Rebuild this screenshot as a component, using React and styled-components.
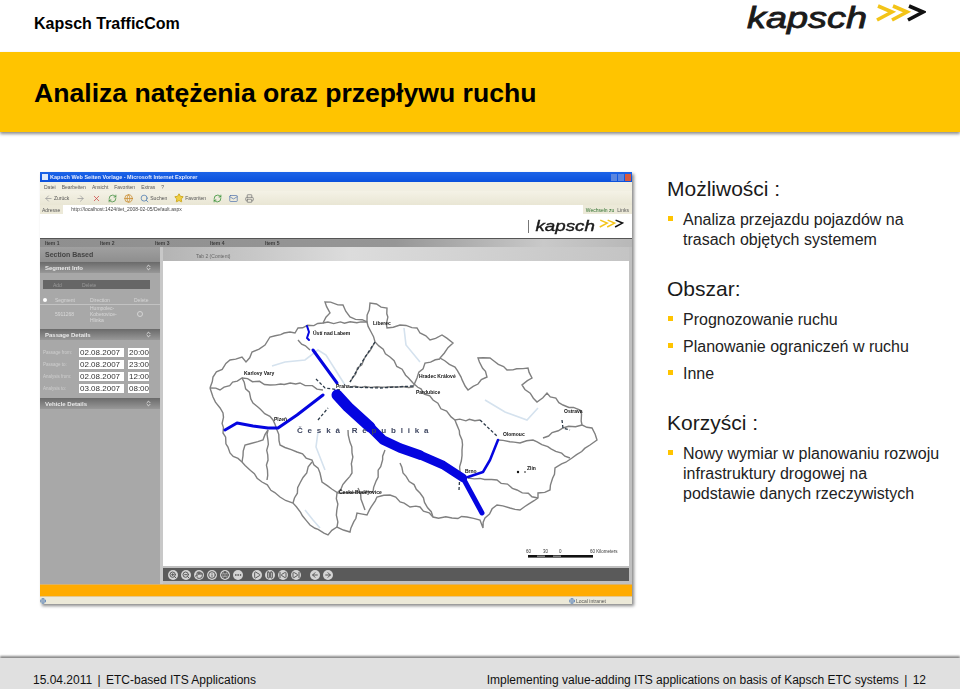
import React from "react";
import styled, { createGlobalStyle } from "styled-components";
import {
  ArrowLeft,
  ArrowRight,
  ChevronsUpDown,
  Ellipsis,
  Globe,
  Hand,
  Info,
  Mail,
  Pause,
  Play,
  Printer,
  RefreshCw,
  Search,
  SkipBack,
  SkipForward,
  Star,
  X,
  ZoomIn,
  ZoomOut,
} from "lucide-react";

const YELLOW = "#ffc400";

const GlobalStyle = createGlobalStyle`
  html, body {
    margin: 0;
    padding: 0;
    background: #fff;
  }
  body {
    font-family: "Liberation Sans", Arial, sans-serif;
    color: #000;
  }
`;

const BORDERS = [
  "210,388 213,377 230,360 242,357 246,362 252,352 265,345 270,337 290,332 295,333 298,328 323,323 330,313 325,302 343,305 350,317 367,322 370,303 387,308 387,328 400,325 417,328 420,333 430,340 442,335 453,343 440,358 455,367 468,390 487,377 478,358 490,358 507,370 528,368 532,378 522,385 537,402 547,393 563,405 580,410 582,425 592,428 597,440 590,445 572,458 555,468 550,490 538,493 538,498 520,510 510,508 497,505 485,518 483,528 480,520 467,517 452,518 433,517 420,507 410,507 390,495 377,497 367,515 357,513 350,532 337,527 328,535 310,525 293,503 280,497 262,482 242,462 230,453 223,433 223,413 213,397 210,388",
  "210,388 220,390 242,378 253,403 273,420 277,430 280,445 297,452 312,460 320,473 322,482 338,493 373,492 385,450",
  "242,378 270,385 300,383 323,390",
  "298,340 310,350",
  "323,323 367,322 375,342 390,357 413,383 433,400 455,420 480,420",
  "375,342 350,382",
  "350,387 413,387 417,378 425,363 440,359",
  "455,420 462,440 462,450 460,472",
  "468,478 497,480 517,490 538,498",
  "498,440 520,443 533,440 570,458",
  "582,425 563,428 543,438",
  "400,463 403,473 420,493 433,517",
  "348,430 352,453 352,473 337,493 337,527",
  "312,462 300,483 293,503",
  "268,430 267,480",
  "242,462 245,445 263,440 268,430",
  "358,488 365,510",
];

// border lines are hand traced, this roughens them a bit so they read like a map
const roughen = (points) => {
  const pairs = points.split(" ").map((p) => p.split(",").map(Number));
  const out = [];
  pairs.forEach(([x, y], i) => {
    out.push(`${x},${y}`);
    const next = pairs[i + 1];
    if (!next) return;
    const steps = Math.floor(Math.hypot(next[0] - x, next[1] - y) / 5);
    for (let s = 1; s < steps; s++) {
      const t = s / steps;
      const dx = Math.sin(x * 7.3 + s * 2.1) * 0.9;
      const dy = Math.cos(y * 5.7 + s * 3.3) * 0.9;
      out.push(`${x + (next[0] - x) * t + dx},${y + (next[1] - y) * t + dy}`);
    }
  });
  return out.join(" ");
};

const RIVERS = [
  "272,366 285,362 305,360 318,350 326,355 345,385",
  "318,432 316,447 325,470",
  "305,510 313,520 320,528",
  "485,400 505,412 527,420 538,408",
  "404,328 406,345 420,362",
];

const DARK_ROADS = [
  "375,342 362,362 350,382",
  "350,387 380,388 413,386",
  "316,379 325,388 340,390",
  "318,420 328,408",
  "480,420 498,437",
  "562,420 563,428 570,430",
  "460,472 459,490",
];

const BLUE_LINES = [
  { points: "337,395 348,407 370,427", width: 11 },
  { points: "370,427 383,440 400,448 420,455", width: 9.5 },
  { points: "420,455 443,465 463,478", width: 8.5 },
  { points: "463,478 482,513", width: 5 },
  { points: "225,430 237,423 253,426 268,428 278,428 297,415 323,395", width: 3 },
  { points: "313,350 337,383", width: 3 },
  { points: "307,326 309,332 307,338 309,340", width: 2 },
  { points: "468,477 483,472 490,460 498,440", width: 2.5 },
];

const CITIES = [
  { name: "Ústí nad Labem", x: 313, y: 335 },
  { name: "Liberec", x: 373, y: 325 },
  { name: "Karlovy Vary", x: 244, y: 375 },
  { name: "Praha", x: 336, y: 388 },
  { name: "Plzeň", x: 274, y: 421 },
  { name: "Hradec Králové", x: 419, y: 378 },
  { name: "Pardubice", x: 416, y: 394 },
  { name: "Ostrava", x: 564, y: 413 },
  { name: "Olomouc", x: 503, y: 436 },
  { name: "Brno", x: 465, y: 473 },
  { name: "Zlín", x: 527, y: 470 },
  { name: "České Budějovice", x: 339, y: 494 },
];

const NAV_ITEMS = ["Item 1", "Item 2", "Item 3", "Item 4", "Item 5"];
const MENU_ITEMS = ["Datei", "Bearbeiten", "Ansicht", "Favoriten", "Extras", "?"];

const PASSAGE_ROWS = [
  { label: "Passage from:", date: "02.08.2007", time: "20:00" },
  { label: "Passage to:", date: "02.08.2007", time: "23:00" },
  { label: "Analysis from:", date: "02.08.2007", time: "12:00" },
  { label: "Analysis to:", date: "03.08.2007", time: "08:00" },
];

const TOOL_GROUPS = [
  [ZoomIn, ZoomOut, Hand, Info, Globe, Ellipsis],
  [Play, Pause, SkipBack, SkipForward],
  [ArrowLeft, ArrowRight],
];

const SECTIONS = [
  {
    title: "Możliwości :",
    items: [["Analiza przejazdu pojazdów na", "trasach objętych systemem"]],
  },
  {
    title: "Obszar:",
    items: [["Prognozowanie ruchu"], ["Planowanie ograniczeń w ruchu"], ["Inne"]],
  },
  {
    title: "Korzyści :",
    items: [
      [
        "Nowy wymiar w planowaniu rozwoju",
        "infrastruktury drogowej na",
        "podstawie danych rzeczywistych",
      ],
    ],
  },
];

const KapschLogo = ({ width, height, small }) => (
  <svg width={width} height={height} viewBox="0 0 182 34">
    <text
      x="3"
      y="26"
      fontFamily="Liberation Sans, sans-serif"
      fontStyle="italic"
      fontSize="29"
      textLength="120"
      lengthAdjust="spacingAndGlyphs"
      fill="#1a1a1a"
      stroke="#1a1a1a"
      strokeWidth="0.8"
    >
      kapsch
    </text>
    <g fill="none" strokeWidth={small ? 3 : 3.6}>
      <polyline points="134,4 148,10 133,18" stroke="#f3c418" />
      <polyline points="149,4 163,10 148,18" stroke="#f3c418" />
      <polyline points="165,4 179,10 164,18" stroke="#111" />
    </g>
  </svg>
);

const CzechMap = () => (
  <MapSvg viewBox="163 261 466 305">
    {RIVERS.map((points) => (
      <polyline key={points} points={points} fill="none" stroke="#d5e2ee" strokeWidth="1.6" />
    ))}
    {BORDERS.map((points) => (
      <polyline
        key={points}
        points={roughen(points)}
        fill="none"
        stroke="#808080"
        strokeWidth="1.4"
      />
    ))}
    {DARK_ROADS.map((points) => (
      <polyline
        key={points}
        points={points}
        fill="none"
        stroke="#2c3a48"
        strokeWidth="1.3"
        strokeDasharray="3 2"
      />
    ))}
    {BLUE_LINES.map((line) => (
      <polyline
        key={line.points}
        points={line.points}
        fill="none"
        stroke="#0505e0"
        strokeWidth={line.width}
        strokeLinejoin="round"
        strokeLinecap="round"
      />
    ))}
    {CITIES.map((city) => (
      <CityLabel key={city.name} x={city.x} y={city.y}>
        {city.name}
      </CityLabel>
    ))}
    <CountryLabel x="297" y="433">
      Č e s k á   R e p u b l i k a
    </CountryLabel>
    <circle cx="518" cy="472" r="1.2" fill="#111" />
    <circle cx="525" cy="472" r="0.8" fill="#111" />
    <ScaleLabel x="526" y="553">60</ScaleLabel>
    <ScaleLabel x="543" y="553">30</ScaleLabel>
    <ScaleLabel x="559" y="553">0</ScaleLabel>
    <ScaleLabel x="590" y="553">60 Kilometers</ScaleLabel>
    <rect x="528" y="555" width="65" height="2.6" fill="#111" />
    <rect x="537" y="555.6" width="8" height="1.2" fill="#999" />
    <rect x="553" y="555.6" width="8" height="1.2" fill="#999" />
  </MapSvg>
);

const App = () => {
  return (
    <Page>
      <GlobalStyle />
      <TopBar>
        <Company>Kapsch TrafficCom</Company>
        <KapschLogo width={182} height={34} />
      </TopBar>
      <Banner>
        <Title>Analiza natężenia oraz przepływu ruchu</Title>
      </Banner>

      <Main>
        <BrowserWindow>
          <TitleBar>
            <TitleIcon />
            <TitleText>Kapsch Web Seiten Vorlage - Microsoft Internet Explorer</TitleText>
            <WindowButtons>
              <WindowButton />
              <WindowButton />
              <WindowButton $close />
            </WindowButtons>
          </TitleBar>
          <MenuBar>
            {MENU_ITEMS.map((item) => (
              <span key={item}>{item}</span>
            ))}
          </MenuBar>
          <IeToolbar>
            <ToolLabel><ArrowLeft size={9} color="#999" /> Zurück</ToolLabel>
            <ArrowRight size={9} color="#999" />
            <X size={9} color="#c44" />
            <RefreshCw size={9} color="#3a8a3a" />
            <Globe size={9} color="#c98a2c" />
            <ToolLabel><Search size={9} color="#4a78b0" /> Suchen</ToolLabel>
            <ToolLabel><Star size={10} color="#c8a010" fill="#f0cf40" /> Favoriten</ToolLabel>
            <RefreshCw size={9} color="#2a8a2a" />
            <Mail size={9} color="#5a7ab0" />
            <Printer size={9} color="#777" />
          </IeToolbar>
          <AddressBar>
            <span>Adresse</span>
            <AddressField>http://localhost:1424/tiet_2008-02-05/Default.aspx</AddressField>
            <GoLabel>Wechseln zu</GoLabel>
            <span>Links</span>
          </AddressBar>
          <LogoBand>
            <LogoDivider />
            <KapschLogo width={90} height={17} small />
          </LogoBand>
          <NavBar>
            {NAV_ITEMS.map((item) => (
              <NavItem key={item}>{item}</NavItem>
            ))}
          </NavBar>
          <AppBody>
            <Sidebar>
              <SectionTitle>Section Based</SectionTitle>
              <PanelHeader>
                Segment Info <ChevronsUpDown size={7} strokeWidth={3} />
              </PanelHeader>
              <FilterBar>
                <span>Add</span>
                <span>Delete</span>
              </FilterBar>
              <SegmentHead>
                <HeadDot />
                <span>Segment</span>
                <span>Direction</span>
                <span>Delete</span>
              </SegmentHead>
              <SegmentRow>
                <span>5911268</span>
                <SegmentDirection>Humpolec-Koberovice-Hlinka</SegmentDirection>
                <DeleteMark />
              </SegmentRow>
              <PanelHeader>
                Passage Details <ChevronsUpDown size={7} strokeWidth={3} />
              </PanelHeader>
              <PassageList>
                {PASSAGE_ROWS.map((row) => (
                  <PassageRow key={row.label}>
                    <PassageLabel>{row.label}</PassageLabel>
                    <DateField>{row.date}</DateField>
                    <DateField>{row.time}</DateField>
                  </PassageRow>
                ))}
              </PassageList>
              <PanelHeader>
                Vehicle Details <ChevronsUpDown size={7} strokeWidth={3} />
              </PanelHeader>
            </Sidebar>
            <ContentArea>
              <TabRow>Tab 2 (Content)</TabRow>
              <MapPanel>
                <CzechMap />
              </MapPanel>
              <MapToolbar>
                {TOOL_GROUPS.map((group, index) => (
                  <ToolGroup key={index}>
                    {group.map((Icon, i) => (
                      <ToolButton key={i}>
                        <Icon size={8} strokeWidth={3} />
                      </ToolButton>
                    ))}
                  </ToolGroup>
                ))}
              </MapToolbar>
            </ContentArea>
          </AppBody>
          <OrangeBar />
          <StatusBar>
            <Globe size={6} color="#3a6ab0" />
            <StatusZone>
              <Globe size={6} color="#3a6ab0" /> Local intranet
            </StatusZone>
          </StatusBar>
        </BrowserWindow>

        <Sections>
          {SECTIONS.map((section) => (
            <Section key={section.title}>
              <Heading>{section.title}</Heading>
              <BulletList>
                {section.items.map((lines) => (
                  <Bullet key={lines[0]}>
                    {lines.map((line) => (
                      <BulletLine key={line}>{line}</BulletLine>
                    ))}
                  </Bullet>
                ))}
              </BulletList>
            </Section>
          ))}
        </Sections>
      </Main>

      <Footer>
        <span>
          15.04.2011 <Pipe>|</Pipe> ETC-based ITS Applications
        </span>
        <span>
          Implementing value-adding ITS applications on basis of Kapsch ETC systems <Pipe>|</Pipe> 12
        </span>
      </Footer>
    </Page>
  );
};

const Page = styled.div`
  width: 960px;
  height: 689px;
  overflow: hidden;
  display: flex;
  flex-direction: column;
  background: #fff;
`;

const TopBar = styled.header`
  height: 52px;
  flex: none;
  display: flex;
  justify-content: space-between;
  align-items: flex-start;
  padding: 0 34px;
  box-sizing: border-box;
  svg {
    margin-top: 2px;
  }
`;

const Company = styled.div`
  font-size: 16px;
  font-weight: 700;
  margin-top: 15px;
  line-height: 18px;
`;

const Banner = styled.div`
  height: 80px;
  flex: none;
  background: ${YELLOW};
  box-shadow: 0 2px 3px #8d8d8d;
  display: flex;
  align-items: center;
  padding-left: 34px;
`;

const Title = styled.h1`
  margin: 0;
  font-size: 26.6px;
  font-weight: 700;
  line-height: 30px;
  position: relative;
  top: 1px;
`;

const Main = styled.main`
  height: 526px;
  flex: none;
  display: flex;
  align-items: flex-start;
  padding: 40px 0 0 40px;
  box-sizing: border-box;
  gap: 35px;
`;

const BrowserWindow = styled.div`
  width: 592px;
  height: 432px;
  flex: none;
  display: flex;
  flex-direction: column;
  background: #ece9d8;
  box-shadow: 2px 2px 3px #8a8a8a;
  filter: blur(0.5px);
  font-size: 5px;
  color: #555;
`;

const TitleBar = styled.div`
  height: 10px;
  flex: none;
  display: flex;
  align-items: center;
  gap: 2px;
  padding: 0 1px 0 2px;
  background: linear-gradient(#1c64e8, #0a50dc);
  color: #e6ecff;
`;

const TitleIcon = styled.span`
  width: 6px;
  height: 6px;
  background: #dfe9fb;
`;

const TitleText = styled.span`
  flex: 1;
  font-size: 5.5px;
  font-weight: 700;
`;

const WindowButtons = styled.span`
  display: flex;
  gap: 1px;
`;

const WindowButton = styled.span`
  width: 6px;
  height: 7px;
  background: ${({ $close }) => ($close ? "#d8583c" : "#5b86df")};
`;

const MenuBar = styled.div`
  height: 9px;
  flex: none;
  display: flex;
  align-items: center;
  gap: 6px;
  padding-left: 4px;
  background: #f1efe2;
`;

const IeToolbar = styled.div`
  height: 14px;
  flex: none;
  display: flex;
  align-items: center;
  gap: 7px;
  padding-left: 4px;
  background: linear-gradient(#f4f2e6, #e9e6d4);
`;

const ToolLabel = styled.span`
  display: inline-flex;
  align-items: center;
  gap: 1px;
`;

const AddressBar = styled.div`
  height: 9px;
  flex: none;
  display: flex;
  align-items: center;
  gap: 3px;
  padding: 0 3px 0 2px;
  background: #ece9d8;
`;

const AddressField = styled.span`
  flex: 1;
  background: #fff;
  height: 9px;
  line-height: 9px;
  padding-left: 8px;
  color: #444;
`;

const GoLabel = styled.span`
  color: #2c6e2c;
`;

const LogoBand = styled.div`
  height: 24px;
  flex: none;
  display: flex;
  align-items: center;
  justify-content: flex-end;
  gap: 5px;
  padding-right: 8px;
  background: #fff;
  border-bottom: 1px solid #555;
`;

const LogoDivider = styled.span`
  width: 1px;
  height: 13px;
  background: #777;
`;

const NavBar = styled.nav`
  height: 8px;
  flex: none;
  display: flex;
  align-items: center;
  padding-left: 5px;
  background: linear-gradient(90deg, #8f8f8f, #969696 60%, #c9c9c9 85%, #b8b8b8);
`;

const NavItem = styled.span`
  width: 55px;
  font-weight: 700;
  color: #3c3c3c;
`;

const AppBody = styled.div`
  flex: 1;
  min-height: 0;
  display: flex;
`;

const Sidebar = styled.aside`
  width: 120px;
  flex: none;
  display: flex;
  flex-direction: column;
  background: #a8a8a8;
  border-right: 3px solid #c8c8c8;
`;

const SectionTitle = styled.div`
  height: 15px;
  line-height: 15px;
  padding-left: 5px;
  font-size: 7px;
  font-weight: 700;
  color: #444;
  background: linear-gradient(#a0a0a0, #8e8e8e);
`;

const PanelHeader = styled.div`
  height: 11px;
  flex: none;
  display: flex;
  align-items: center;
  justify-content: space-between;
  padding: 0 8px 0 5px;
  font-size: 6px;
  font-weight: 700;
  color: #e8e8e8;
  background: linear-gradient(#6a6a6a, #989898);
`;

const FilterBar = styled.div`
  height: 9px;
  margin: 7px 10px 7px 3px;
  display: flex;
  align-items: center;
  gap: 20px;
  padding-left: 10px;
  color: #999;
  background: #666;
`;

const SegmentHead = styled.div`
  height: 8px;
  display: grid;
  grid-template-columns: 12px 35px 44px 1fr;
  align-items: center;
  padding-left: 3px;
  color: #d6d6d6;
  border-bottom: 1px solid #c2c2c2;
`;

const HeadDot = styled.span`
  width: 4px;
  height: 4px;
  border-radius: 50%;
  background: #fff;
`;

const SegmentRow = styled.div`
  height: 18px;
  margin-bottom: 6px;
  display: grid;
  grid-template-columns: 35px 47px 1fr;
  align-items: center;
  padding-left: 15px;
  line-height: 6px;
  color: #d8d8d8;
`;

const SegmentDirection = styled.span`
  max-width: 24px;
`;

const DeleteMark = styled.span`
  width: 4px;
  height: 4px;
  border-radius: 50%;
  border: 1px solid #d4d4d4;
`;

const PassageList = styled.div`
  display: flex;
  flex-direction: column;
  gap: 3px;
  padding: 8px 0 5px 3px;
`;

const PassageRow = styled.div`
  display: grid;
  grid-template-columns: 32px 45px 21px;
  column-gap: 4px;
  align-items: center;
`;

const PassageLabel = styled.span`
  font-size: 4.5px;
  color: #cfcfcf;
  white-space: nowrap;
`;

const DateField = styled.span`
  height: 9px;
  line-height: 9px;
  padding-left: 1px;
  font-size: 8px;
  color: #333;
  background: #fff;
`;

const ContentArea = styled.div`
  flex: 1;
  min-width: 0;
  display: flex;
  flex-direction: column;
  background: #c0c0c0;
  padding-right: 3px;
`;

const TabRow = styled.div`
  height: 14px;
  flex: none;
  line-height: 18px;
  padding-left: 33px;
  color: #666;
  background: linear-gradient(90deg, #b4b4b4, #dcdcdc 40%, #c4c4c4);
`;

const MapPanel = styled.div`
  height: 305px;
  flex: none;
  background: #fff;
`;

const MapSvg = styled.svg`
  display: block;
  width: 466px;
  height: 305px;
`;

const CityLabel = styled.text`
  font-family: "Liberation Sans", sans-serif;
  font-size: 5px;
  font-weight: 700;
  fill: #111;
`;

const CountryLabel = styled.text`
  font-family: "Liberation Sans", sans-serif;
  font-size: 8px;
  font-weight: 700;
  fill: #3e4660;
  letter-spacing: 1.3px;
  white-space: pre;
`;

const ScaleLabel = styled.text`
  font-family: "Liberation Sans", sans-serif;
  font-size: 4.5px;
  fill: #333;
`;

const MapToolbar = styled.div`
  height: 13px;
  flex: none;
  margin-top: 2px;
  display: flex;
  align-items: center;
  gap: 9px;
  padding-left: 5px;
  background: #5a5a5a;
`;

const ToolGroup = styled.div`
  display: flex;
  gap: 3px;
`;

const ToolButton = styled.span`
  width: 10px;
  height: 10px;
  display: flex;
  align-items: center;
  justify-content: center;
  border-radius: 50%;
  color: #5a5a5a;
  background: #d4d4d4;
`;

const OrangeBar = styled.div`
  height: 11px;
  flex: none;
  background: #ffab00;
  border-top: 1px solid #d9b26a;
  border-bottom: 1px solid #e5c890;
`;

const StatusBar = styled.div`
  height: 7px;
  flex: none;
  display: flex;
  align-items: center;
  justify-content: space-between;
  padding-right: 26px;
  background: #ece9d8;
`;

const StatusZone = styled.span`
  display: inline-flex;
  align-items: center;
  gap: 1px;
`;

const Sections = styled.div`
  flex: 1;
  display: flex;
  flex-direction: column;
  gap: 27px;
  padding-top: 5px;
`;

const Section = styled.section`
  display: flex;
  flex-direction: column;
  gap: 9px;
`;

const Heading = styled.h2`
  margin: 0;
  font-size: 21px;
  font-weight: 400;
  line-height: 24px;
  color: #1a1a1a;
`;

const BulletList = styled.ul`
  margin: 0;
  padding: 0;
  list-style: none;
  display: flex;
  flex-direction: column;
  gap: 7px;
`;

const Bullet = styled.li`
  position: relative;
  padding-left: 16px;
  font-size: 16px;
  line-height: 20px;
  color: #222;
  &::before {
    content: "";
    position: absolute;
    left: 1px;
    top: 6px;
    width: 5px;
    height: 5px;
    background: ${YELLOW};
  }
`;

const BulletLine = styled.div`
  white-space: nowrap;
`;

const Footer = styled.footer`
  height: 31px;
  flex: none;
  display: flex;
  justify-content: space-between;
  align-items: flex-end;
  padding: 0 34px 1px 33px;
  box-sizing: border-box;
  font-size: 12px;
  line-height: 16px;
  color: #111;
  background: #e0e0e0;
  box-shadow: 0 -2px 2px #8a8a8a;
`;

const Pipe = styled.span`
  margin: 0 2px;
`;

export default App;
